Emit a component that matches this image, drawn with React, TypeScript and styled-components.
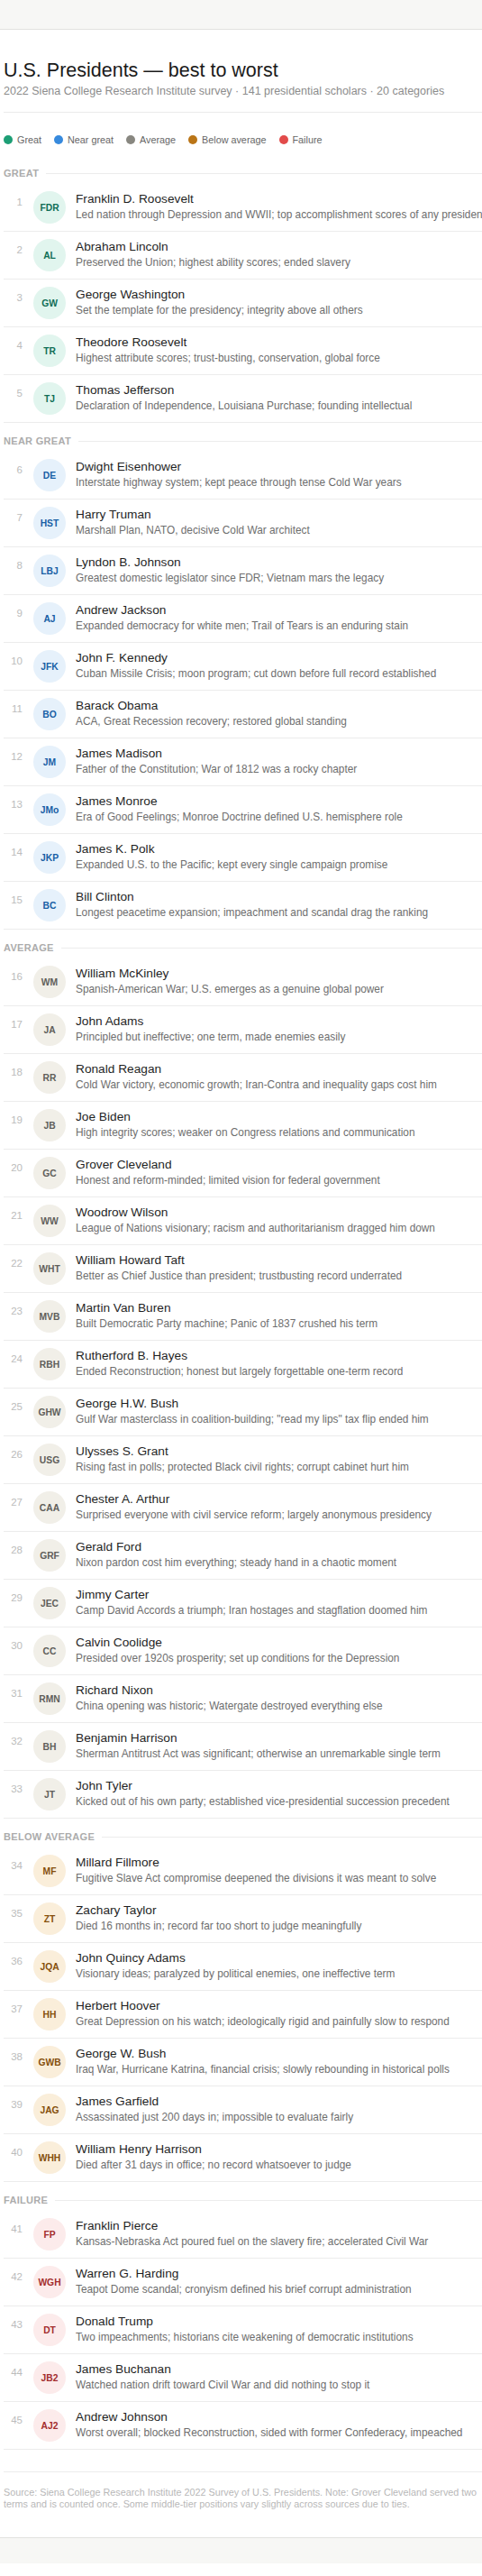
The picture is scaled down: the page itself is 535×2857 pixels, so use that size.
import React from "react";
import styled, { createGlobalStyle } from "styled-components";

const Global = createGlobalStyle`
  html, body { margin: 0; padding: 0; background: #ffffff; }
  body { font-family: "Liberation Sans", Arial, sans-serif; overflow-x: hidden; }
`;

type Tier = "great" | "near" | "avg" | "below" | "fail";

const TIERS: Record<Tier, { label: string; heading: string; dot: string; bg: string; fg: string }> = {
  great: { label: "Great", heading: "Great", dot: "#1D9E75", bg: "#E1F5EE", fg: "#0F6E56" },
  near: { label: "Near great", heading: "Near great", dot: "#378ADD", bg: "#E6F1FB", fg: "#185FA5" },
  avg: { label: "Average", heading: "Average", dot: "#888780", bg: "#F1EFE8", fg: "#5F5E5A" },
  below: { label: "Below average", heading: "Below average", dot: "#BA7517", bg: "#FAEEDA", fg: "#854F0B" },
  fail: { label: "Failure", heading: "Failure", dot: "#E24B4A", bg: "#FCEBEB", fg: "#A32D2D" },
};

type President = { rank: number; name: string; initials: string; note: string };

const DATA: { tier: Tier; items: President[] }[] = [
  {
    tier: "great",
    items: [
      { rank: 1, name: "Franklin D. Roosevelt", initials: "FDR", note: "Led nation through Depression and WWII; top accomplishment scores of any president" },
      { rank: 2, name: "Abraham Lincoln", initials: "AL", note: "Preserved the Union; highest ability scores; ended slavery" },
      { rank: 3, name: "George Washington", initials: "GW", note: "Set the template for the presidency; integrity above all others" },
      { rank: 4, name: "Theodore Roosevelt", initials: "TR", note: "Highest attribute scores; trust-busting, conservation, global force" },
      { rank: 5, name: "Thomas Jefferson", initials: "TJ", note: "Declaration of Independence, Louisiana Purchase; founding intellectual" },
    ],
  },
  {
    tier: "near",
    items: [
      { rank: 6, name: "Dwight Eisenhower", initials: "DE", note: "Interstate highway system; kept peace through tense Cold War years" },
      { rank: 7, name: "Harry Truman", initials: "HST", note: "Marshall Plan, NATO, decisive Cold War architect" },
      { rank: 8, name: "Lyndon B. Johnson", initials: "LBJ", note: "Greatest domestic legislator since FDR; Vietnam mars the legacy" },
      { rank: 9, name: "Andrew Jackson", initials: "AJ", note: "Expanded democracy for white men; Trail of Tears is an enduring stain" },
      { rank: 10, name: "John F. Kennedy", initials: "JFK", note: "Cuban Missile Crisis; moon program; cut down before full record established" },
      { rank: 11, name: "Barack Obama", initials: "BO", note: "ACA, Great Recession recovery; restored global standing" },
      { rank: 12, name: "James Madison", initials: "JM", note: "Father of the Constitution; War of 1812 was a rocky chapter" },
      { rank: 13, name: "James Monroe", initials: "JMo", note: "Era of Good Feelings; Monroe Doctrine defined U.S. hemisphere role" },
      { rank: 14, name: "James K. Polk", initials: "JKP", note: "Expanded U.S. to the Pacific; kept every single campaign promise" },
      { rank: 15, name: "Bill Clinton", initials: "BC", note: "Longest peacetime expansion; impeachment and scandal drag the ranking" },
    ],
  },
  {
    tier: "avg",
    items: [
      { rank: 16, name: "William McKinley", initials: "WM", note: "Spanish-American War; U.S. emerges as a genuine global power" },
      { rank: 17, name: "John Adams", initials: "JA", note: "Principled but ineffective; one term, made enemies easily" },
      { rank: 18, name: "Ronald Reagan", initials: "RR", note: "Cold War victory, economic growth; Iran-Contra and inequality gaps cost him" },
      { rank: 19, name: "Joe Biden", initials: "JB", note: "High integrity scores; weaker on Congress relations and communication" },
      { rank: 20, name: "Grover Cleveland", initials: "GC", note: "Honest and reform-minded; limited vision for federal government" },
      { rank: 21, name: "Woodrow Wilson", initials: "WW", note: "League of Nations visionary; racism and authoritarianism dragged him down" },
      { rank: 22, name: "William Howard Taft", initials: "WHT", note: "Better as Chief Justice than president; trustbusting record underrated" },
      { rank: 23, name: "Martin Van Buren", initials: "MVB", note: "Built Democratic Party machine; Panic of 1837 crushed his term" },
      { rank: 24, name: "Rutherford B. Hayes", initials: "RBH", note: "Ended Reconstruction; honest but largely forgettable one-term record" },
      { rank: 25, name: "George H.W. Bush", initials: "GHW", note: "Gulf War masterclass in coalition-building; \"read my lips\" tax flip ended him" },
      { rank: 26, name: "Ulysses S. Grant", initials: "USG", note: "Rising fast in polls; protected Black civil rights; corrupt cabinet hurt him" },
      { rank: 27, name: "Chester A. Arthur", initials: "CAA", note: "Surprised everyone with civil service reform; largely anonymous presidency" },
      { rank: 28, name: "Gerald Ford", initials: "GRF", note: "Nixon pardon cost him everything; steady hand in a chaotic moment" },
      { rank: 29, name: "Jimmy Carter", initials: "JEC", note: "Camp David Accords a triumph; Iran hostages and stagflation doomed him" },
      { rank: 30, name: "Calvin Coolidge", initials: "CC", note: "Presided over 1920s prosperity; set up conditions for the Depression" },
      { rank: 31, name: "Richard Nixon", initials: "RMN", note: "China opening was historic; Watergate destroyed everything else" },
      { rank: 32, name: "Benjamin Harrison", initials: "BH", note: "Sherman Antitrust Act was significant; otherwise an unremarkable single term" },
      { rank: 33, name: "John Tyler", initials: "JT", note: "Kicked out of his own party; established vice-presidential succession precedent" },
    ],
  },
  {
    tier: "below",
    items: [
      { rank: 34, name: "Millard Fillmore", initials: "MF", note: "Fugitive Slave Act compromise deepened the divisions it was meant to solve" },
      { rank: 35, name: "Zachary Taylor", initials: "ZT", note: "Died 16 months in; record far too short to judge meaningfully" },
      { rank: 36, name: "John Quincy Adams", initials: "JQA", note: "Visionary ideas; paralyzed by political enemies, one ineffective term" },
      { rank: 37, name: "Herbert Hoover", initials: "HH", note: "Great Depression on his watch; ideologically rigid and painfully slow to respond" },
      { rank: 38, name: "George W. Bush", initials: "GWB", note: "Iraq War, Hurricane Katrina, financial crisis; slowly rebounding in historical polls" },
      { rank: 39, name: "James Garfield", initials: "JAG", note: "Assassinated just 200 days in; impossible to evaluate fairly" },
      { rank: 40, name: "William Henry Harrison", initials: "WHH", note: "Died after 31 days in office; no record whatsoever to judge" },
    ],
  },
  {
    tier: "fail",
    items: [
      { rank: 41, name: "Franklin Pierce", initials: "FP", note: "Kansas-Nebraska Act poured fuel on the slavery fire; accelerated Civil War" },
      { rank: 42, name: "Warren G. Harding", initials: "WGH", note: "Teapot Dome scandal; cronyism defined his brief corrupt administration" },
      { rank: 43, name: "Donald Trump", initials: "DT", note: "Two impeachments; historians cite weakening of democratic institutions" },
      { rank: 44, name: "James Buchanan", initials: "JB2", note: "Watched nation drift toward Civil War and did nothing to stop it" },
      { rank: 45, name: "Andrew Johnson", initials: "AJ2", note: "Worst overall; blocked Reconstruction, sided with former Confederacy, impeached" },
    ],
  },
];

const Page = styled.div`
  width: 100%;
  overflow: hidden;
`;

const Bar = styled.div<{ $bottom?: boolean }>`
  height: ${(p) => (p.$bottom ? "28px" : "32px")};
  background: #f7f7f5;
  border-style: solid;
  border-color: #e2e2df;
  border-width: ${(p) => (p.$bottom ? "1px 0 0 0" : "0 0 1px 0")};
`;

const Main = styled.main`
  width: 552px;
  margin-left: 4px;
  padding-top: 32px;
`;

const Header = styled.header`
  padding-bottom: 14px;
  border-bottom: 1px solid #ebebeb;
`;

const Title = styled.h1`
  margin: 0;
  font-size: 21.5px;
  line-height: 26px;
  font-weight: 400;
  color: #1a1a1a;
`;

const Subtitle = styled.p`
  margin: 2px 0 0;
  font-size: 12.5px;
  line-height: 17px;
  color: #8c8c8c;
`;

const Legend = styled.div`
  display: flex;
  align-items: center;
  gap: 14px;
  margin: 22px 0 22px;
  height: 16px;
`;

const LegendItem = styled.span`
  display: inline-flex;
  align-items: center;
  gap: 5px;
  font-size: 10.8px;
  color: #666666;
`;

const Dot = styled.span<{ $color: string }>`
  width: 10px;
  height: 10px;
  border-radius: 50%;
  background: ${(p) => p.$color};
`;

const SectionHead = styled.div`
  display: flex;
  align-items: center;
  gap: 8px;
  margin: 13px 0 5px;
  height: 14px;
  font-size: 11px;
  font-weight: 700;
  letter-spacing: 0.3px;
  text-transform: uppercase;
  color: #acacac;
  &::after {
    content: "";
    flex: 1;
    height: 1px;
    background: #ececec;
  }
`;

const Row = styled.div`
  display: flex;
  align-items: flex-start;
  padding: 8px 0;
  border-bottom: 1px solid #ececec;
`;

const Rank = styled.span`
  width: 21px;
  flex: none;
  text-align: right;
  padding-top: 5px;
  font-size: 11.5px;
  line-height: 14px;
  color: #bcbcbc;
`;

const Avatar = styled.span<{ $bg: string; $fg: string }>`
  flex: none;
  width: 36px;
  height: 36px;
  margin: 0 11px 0 12px;
  border-radius: 50%;
  display: flex;
  align-items: center;
  justify-content: center;
  background: ${(p) => p.$bg};
  color: ${(p) => p.$fg};
  font-size: 10.3px;
  font-weight: 700;
`;

const Info = styled.div`
  display: flex;
  flex-direction: column;
  white-space: nowrap;
`;

const Name = styled.span`
  font-size: 13.7px;
  line-height: 18px;
  color: #1f1f1f;
`;

const Note = styled.span`
  font-size: 11.85px;
  line-height: 16px;
  color: #6e6e6e;
`;

const Foot = styled.p`
  margin: 24px 0 0;
  padding: 16px 0 31px;
  border-top: 1px solid #ececec;
  font-size: 10.8px;
  line-height: 12.5px;
  color: #b8b8b8;
`;

export default function App() {
  return (
    <Page>
      <Global />
      <Bar />
      <Main>
        <Header>
          <Title>U.S. Presidents — best to worst</Title>
          <Subtitle>2022 Siena College Research Institute survey · 141 presidential scholars · 20 categories</Subtitle>
        </Header>
        <Legend>
          {(Object.keys(TIERS) as Tier[]).map((t) => (
            <LegendItem key={t}>
              <Dot $color={TIERS[t].dot} />
              {TIERS[t].label}
            </LegendItem>
          ))}
        </Legend>
        {DATA.map((section) => {
          const tier = TIERS[section.tier];
          return (
            <section key={section.tier}>
              <SectionHead>{tier.heading}</SectionHead>
              {section.items.map((p) => (
                <Row key={p.rank}>
                  <Rank>{p.rank}</Rank>
                  <Avatar $bg={tier.bg} $fg={tier.fg}>{p.initials}</Avatar>
                  <Info>
                    <Name>{p.name}</Name>
                    <Note>{p.note}</Note>
                  </Info>
                </Row>
              ))}
            </section>
          );
        })}
        <Foot>
          Source: Siena College Research Institute 2022 Survey of U.S. Presidents. Note: Grover Cleveland served two terms and is counted once. Some middle-tier positions vary slightly across sources due to ties.
        </Foot>
      </Main>
      <Bar $bottom />
    </Page>
  );
}
